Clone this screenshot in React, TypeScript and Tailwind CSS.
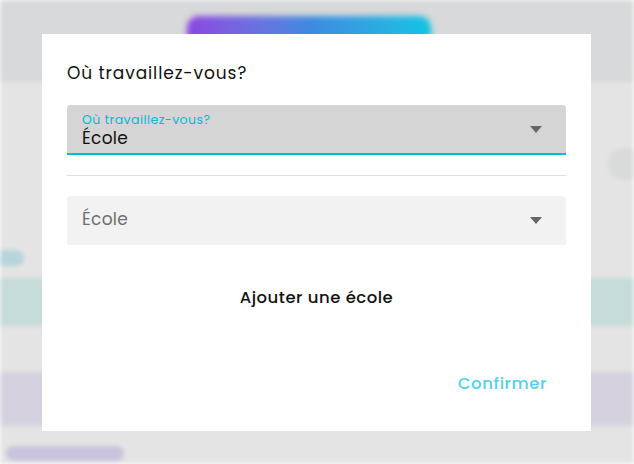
import React from 'react';

const font = { fontFamily: 'Poppins, Inter, "Noto Sans", sans-serif' };

function Caret() {
    return (
        <svg width="12" height="7" viewBox="0 0 12 7" className="shrink-0">
            <path d="M0 0h12L6 7z" fill="#666" />
        </svg>
    );
}

// blurred page behind the modal
function Backdrop() {
    return (
        <div className="flex h-[464px] flex-col bg-[#e4e4e4] blur-[2px]">
            <div className="flex h-[82px] justify-center bg-[#d8d9da] pr-[16px] pt-[16px]">
                <div className="h-[40px] w-[244px] rounded-xl bg-gradient-to-r from-[#8a45e0] via-[#3c8ae0] to-[#0cc4e2] blur-[2px]" />
            </div>
            <div className="flex h-[186px] flex-col justify-between pb-[2px]">
                <div className="mt-[66px] h-[32px] w-[26px] self-end rounded-l-full bg-[#d9dada]" />
                <div className="h-[16px] w-[24px] rounded-r-full bg-[#b8d4dc]" />
            </div>
            <div className="h-[10px]" />
            <div className="h-[48px] bg-[#c6dcd9]" />
            <div className="h-[46px]" />
            <div className="h-[54px] bg-[#d6d1df]" />
            <div className="flex flex-1 items-center px-[6px] pt-[16px]">
                <div className="h-[15px] w-[118px] rounded-full bg-[#cbc3de]" />
            </div>
        </div>
    );
}

export default function App() {
    return (
        <div className="relative h-[464px] w-[634px] overflow-hidden" style={font}>
            <Backdrop />
            <div className="absolute left-[42px] top-[34px] flex h-[397px] w-[549px] flex-col bg-white px-[25px] pt-[27px]">
                <h2 className="text-[17px] leading-6 tracking-[0.9px] text-[#111]">Où travaillez-vous?</h2>

                <div className="mt-[20px] flex h-[50px] items-center rounded-t-[4px] border-b-2 border-[#00bcd4] bg-[#d5d5d5] pl-[15px] pr-[24px]">
                    <div className="flex flex-1 flex-col pt-[4px]">
                        <span className="text-[12.5px] leading-[14px] tracking-[0.45px] text-[#00bcd4]">Où travaillez-vous?</span>
                        <span className="text-[17px] leading-[22px] tracking-[0.3px] text-[#111]">École</span>
                    </div>
                    <Caret />
                </div>

                <div className="mt-[20px] h-px bg-[#e0e0e0]" />

                <div className="mt-[20px] flex h-[49px] items-center rounded-t-[4px] bg-[#f2f2f2] pl-[15px] pr-[24px]">
                    <span className="flex-1 pb-[4px] text-[17px] leading-[22px] tracking-[0.3px] text-[#6f6f6f]">École</span>
                    <Caret />
                </div>

                <button className="mt-[41px] self-center text-[16.5px] font-medium leading-6 tracking-[0.5px] text-[#111]">
                    Ajouter une école
                </button>

                <div className="mt-auto flex justify-end pb-[35px] pr-[19px]">
                    <button className="text-[16.5px] font-medium leading-6 tracking-[0.6px] text-[#4fd3ec]">Confirmer</button>
                </div>
            </div>
        </div>
    );
}
